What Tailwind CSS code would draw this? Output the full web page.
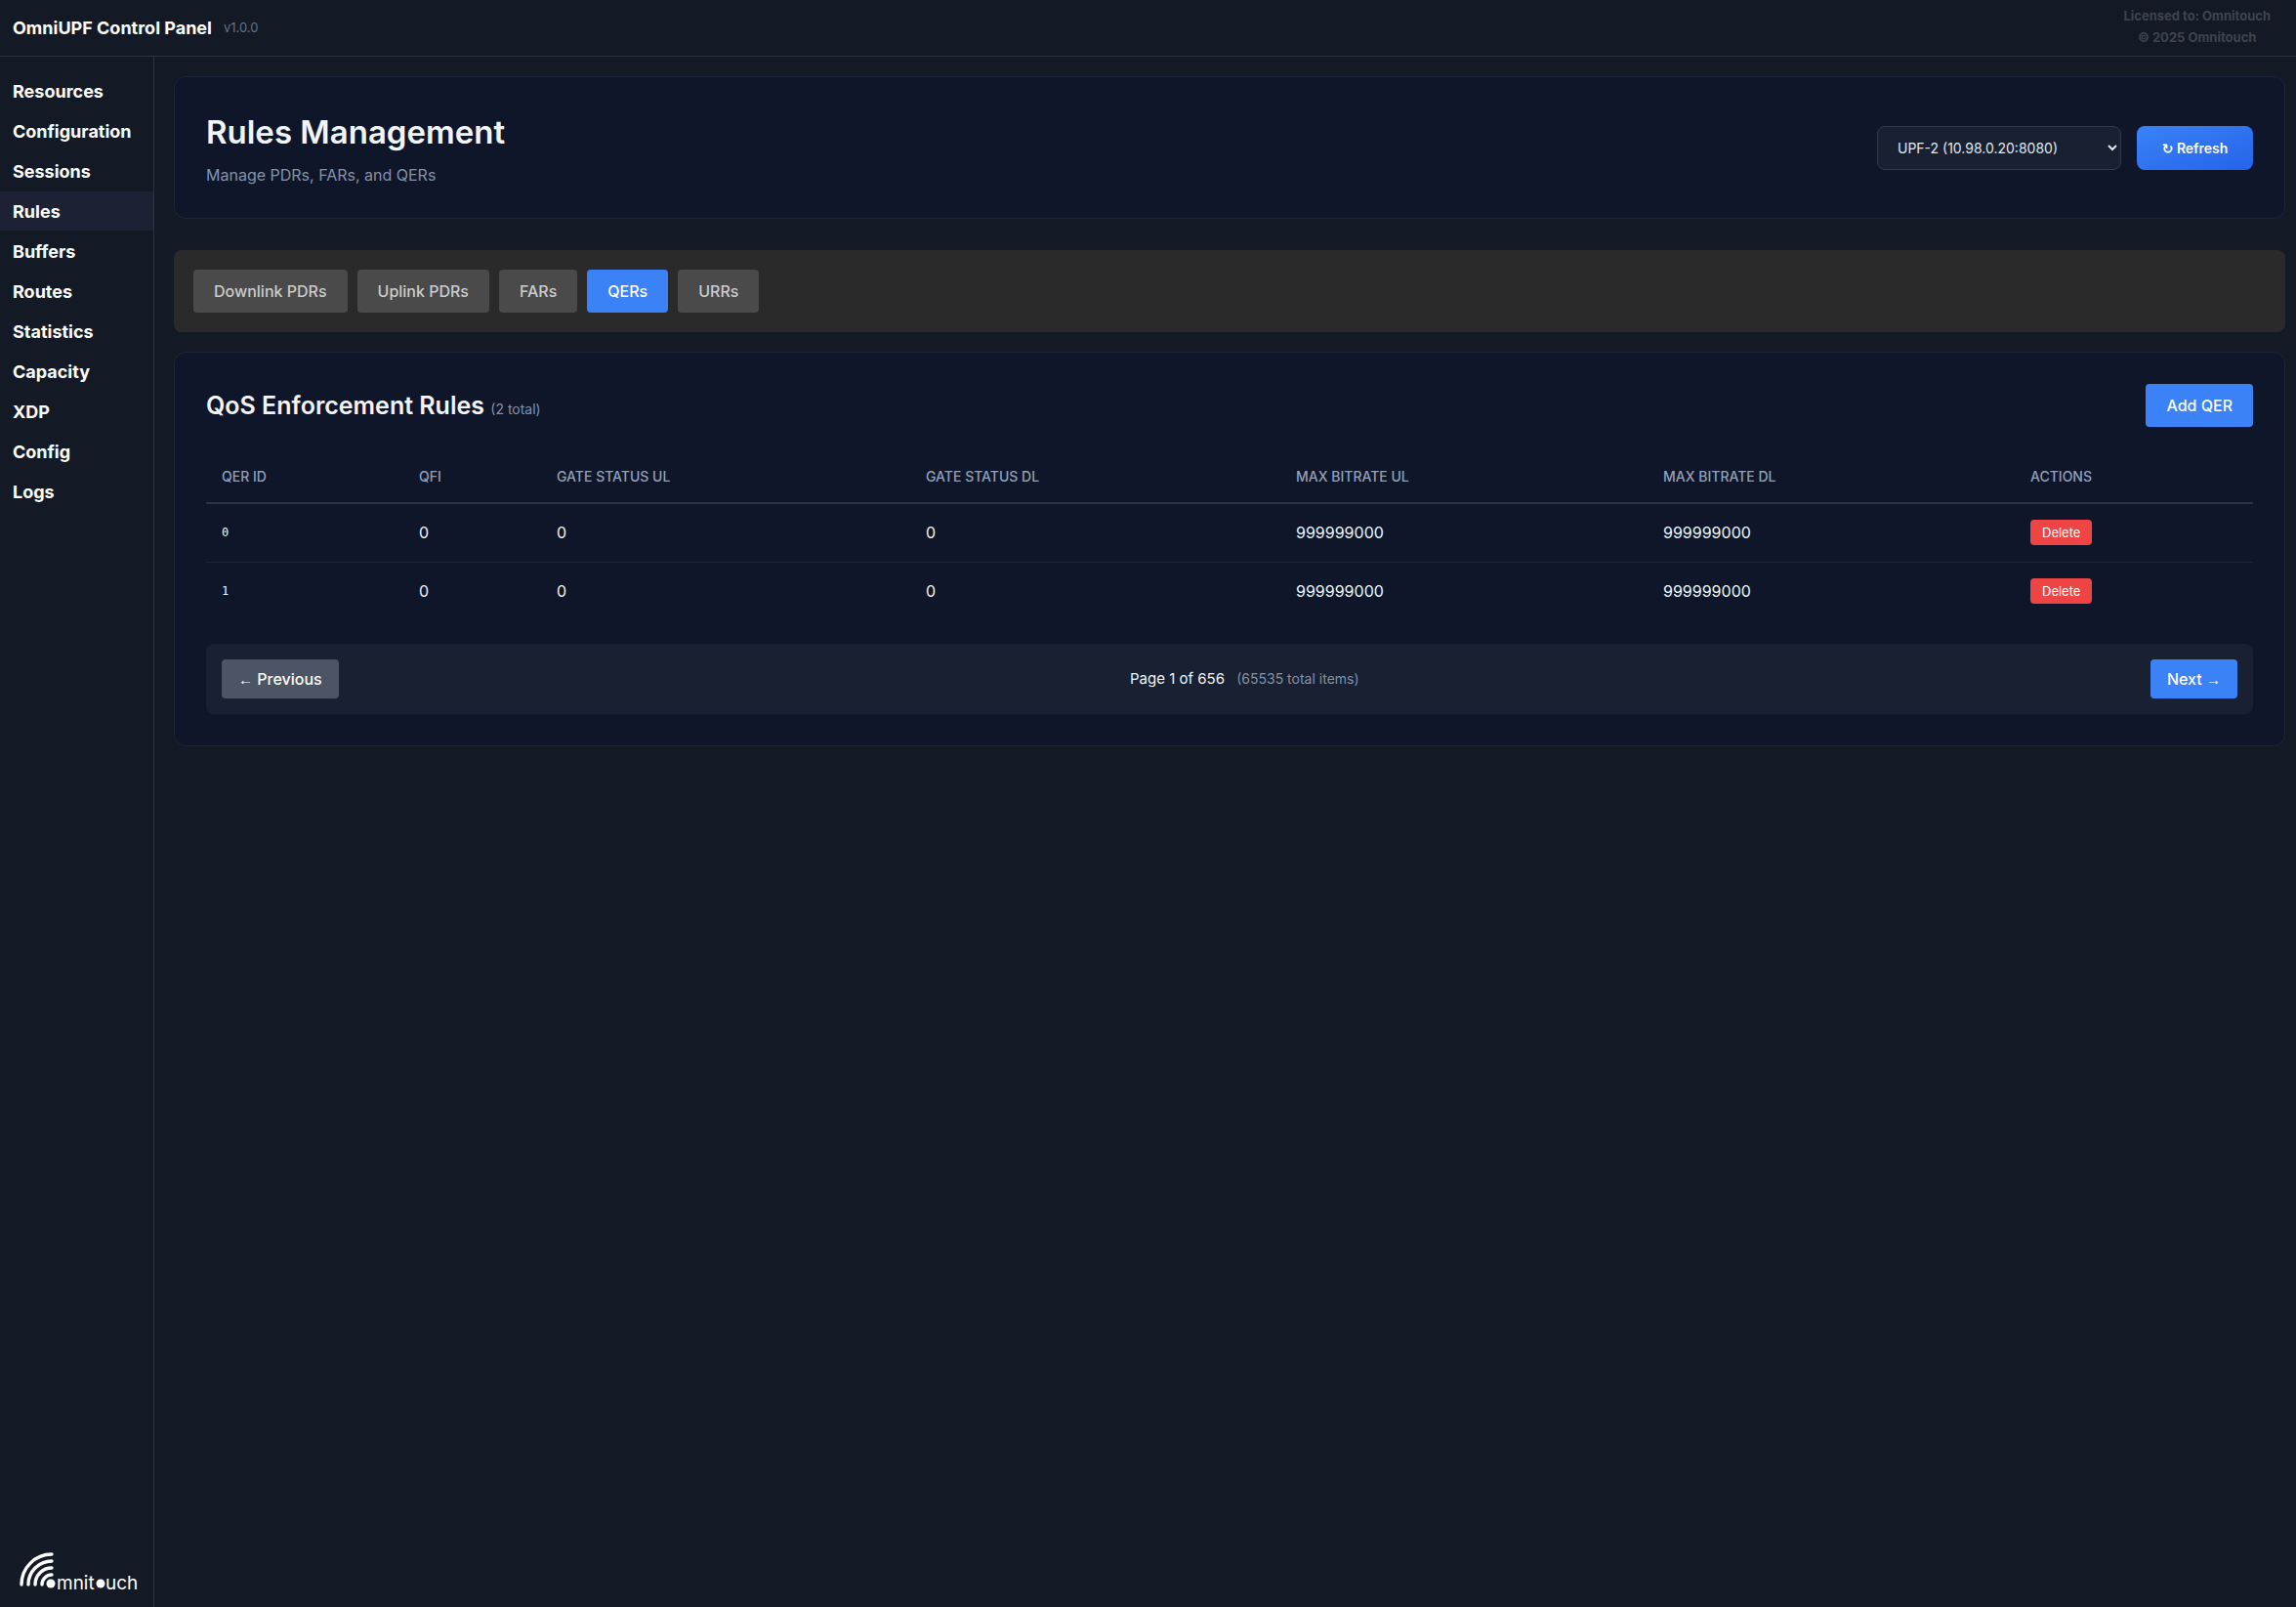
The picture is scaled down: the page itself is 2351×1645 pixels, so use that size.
<!DOCTYPE html>
<html lang="en">
<head>
  <meta charset="UTF-8">
  <meta name="viewport" content="width=device-width, initial-scale=1.0">
  <title>OmniUPF Control Panel</title>
  <script src="https://cdn.jsdelivr.net/npm/@tailwindcss/browser@4"></script>
</head>
<body class="min-h-screen flex flex-col bg-[#131a26] text-slate-100 text-base font-['Inter','Liberation_Sans',sans-serif]">

  <!-- Header -->
  <header class="h-[58px] shrink-0 flex items-center justify-between pl-[13px] pr-[26px] border-b border-[#2b3644]">
    <div class="flex items-center gap-3">
      <h1 class="text-[18px] font-bold text-white">OmniUPF Control Panel</h1>
      <span class="text-[13px] text-slate-500">v1.0.0</span>
    </div>
    <div class="pb-1 text-[13px] leading-[22px] font-bold text-center text-[#3e444e]">
      <p>Licensed to: Omnitouch</p>
      <p>© 2025 Omnitouch</p>
    </div>
  </header>

  <div class="flex flex-1">
    <!-- Sidebar -->
    <aside class="w-[158px] shrink-0 flex flex-col justify-between border-r border-[#2b3644] pt-[15px]">
      <nav class="flex flex-col gap-px text-[18px] leading-[38px] font-bold text-white">
        <a href="#" class="pl-[13px] pt-0.5 hover:bg-[#1c2233]">Resources</a>
        <a href="#" class="pl-[13px] pt-0.5 hover:bg-[#1c2233]">Configuration</a>
        <a href="#" class="pl-[13px] pt-0.5 hover:bg-[#1c2233]">Sessions</a>
        <a href="#" class="pl-[13px] pt-0.5 bg-[#1c2233]">Rules</a>
        <a href="#" class="pl-[13px] pt-0.5 hover:bg-[#1c2233]">Buffers</a>
        <a href="#" class="pl-[13px] pt-0.5 hover:bg-[#1c2233]">Routes</a>
        <a href="#" class="pl-[13px] pt-0.5 hover:bg-[#1c2233]">Statistics</a>
        <a href="#" class="pl-[13px] pt-0.5 hover:bg-[#1c2233]">Capacity</a>
        <a href="#" class="pl-[13px] pt-0.5 hover:bg-[#1c2233]">XDP</a>
        <a href="#" class="pl-[13px] pt-0.5 hover:bg-[#1c2233]">Config</a>
        <a href="#" class="pl-[13px] pt-0.5 hover:bg-[#1c2233]">Logs</a>
      </nav>
      <svg class="ml-5 mb-2 w-[124px] h-[48px]" viewBox="0 0 124 48" fill="none" stroke="#fff" stroke-width="3.4" stroke-linecap="round" role="img" aria-label="omnitouch">
        <path d="M2 33A31 31 0 0 1 33 2"/>
        <path d="M9 33A24 24 0 0 1 33 9"/>
        <path d="M16 33A17 17 0 0 1 33 16"/>
        <path d="M23 33A10 10 0 0 1 33 23"/>
        <circle cx="32" cy="32" r="4.5" fill="#fff" stroke="none"/>
        <circle cx="83" cy="32" r="4.5" fill="#fff" stroke="none"/>
        <g fill="#fff" stroke="none" font-size="19">
          <text x="38" y="38">mnit</text>
          <text x="88" y="38">uch</text>
        </g>
      </svg>
    </aside>

    <!-- Main Content -->
    <main class="flex-1 pl-5 pr-[11px] py-5">
      <section class="flex items-center justify-between h-[146px] px-8 mb-8 rounded-xl border border-[#1b2638] bg-[#101629]">
        <div class="pt-2">
          <h2 class="text-[33px] leading-[40px] font-semibold mb-2">Rules Management</h2>
          <p class="leading-[32px] text-[#8492a8]">Manage PDRs, FARs, and QERs</p>
        </div>
        <div class="flex gap-4">
          <select aria-label="UPF instance" class="w-[250px] h-[45px] pl-4 rounded-lg border border-[#2f3948] bg-[#182031] text-[14px] text-slate-200">
            <option>UPF-2 (10.98.0.20:8080)</option>
          </select>
          <button class="w-[119px] h-[45px] rounded-lg bg-linear-to-br from-[#3b82f6] to-[#2563eb] text-[14px] font-semibold text-white"><span class="font-['DejaVu_Sans'] leading-none">↻</span> Refresh</button>
        </div>
      </section>

      <!-- Tabs -->
      <div class="flex gap-[10px] p-5 mb-5 rounded-lg bg-[#2a2a2a] font-medium text-[#cccccc]">
        <button class="h-[44px] px-[21px] rounded bg-[#4a4a4a]">Downlink PDRs</button>
        <button class="h-[44px] px-[21px] rounded bg-[#4a4a4a]">Uplink PDRs</button>
        <button class="h-[44px] px-[21px] rounded bg-[#4a4a4a]">FARs</button>
        <button class="h-[44px] px-[21px] rounded bg-[#3b82f6] text-white">QERs</button>
        <button class="h-[44px] px-[21px] rounded bg-[#4a4a4a]">URRs</button>
      </div>

      <section class="p-8 rounded-xl border border-[#1b2638] bg-[#101629]">
        <div class="flex items-center justify-between mb-6">
          <h3 class="text-[25px] leading-[40px] font-semibold">QoS Enforcement Rules <span class="text-[14px] leading-none font-normal text-[#8492a8]">(2 total)</span></h3>
          <button class="h-[44px] px-[21px] rounded bg-[#3b82f6] font-medium text-white">Add QER</button>
        </div>

        <table class="w-full table-fixed text-left">
          <thead class="text-[14px] text-slate-400">
            <tr class="h-[54px] border-b-2 border-[#2a3346]">
              <th class="w-[202px] px-4 font-medium">QER ID</th>
              <th class="w-[141px] px-4 font-medium">QFI</th>
              <th class="w-[378px] px-4 font-medium">GATE STATUS UL</th>
              <th class="w-[379px] px-4 font-medium">GATE STATUS DL</th>
              <th class="w-[376px] px-4 font-medium">MAX BITRATE UL</th>
              <th class="w-[376px] px-4 font-medium">MAX BITRATE DL</th>
              <th class="px-4 font-medium">ACTIONS</th>
            </tr>
          </thead>
          <tbody>
            <tr class="h-[60px] border-b border-[#1b2638]">
              <td class="px-4 text-[12px] font-['DejaVu_Sans_Mono','Liberation_Mono',monospace]">0</td>
              <td class="px-4">0</td>
              <td class="px-4">0</td>
              <td class="px-4">0</td>
              <td class="px-4">999999000</td>
              <td class="px-4">999999000</td>
              <td class="px-4"><button class="block h-[26px] px-3 rounded bg-[#ef4444] text-[13px] text-white">Delete</button></td>
            </tr>
            <tr class="h-[60px]">
              <td class="px-4 text-[12px] font-['DejaVu_Sans_Mono','Liberation_Mono',monospace]">1</td>
              <td class="px-4">0</td>
              <td class="px-4">0</td>
              <td class="px-4">0</td>
              <td class="px-4">999999000</td>
              <td class="px-4">999999000</td>
              <td class="px-4"><button class="block h-[26px] px-3 rounded bg-[#ef4444] text-[13px] text-white">Delete</button></td>
            </tr>
          </tbody>
        </table>

        <!-- Pagination -->
        <div class="flex items-center justify-between mt-6 p-4 rounded-lg bg-[#182031]">
          <button class="h-[40px] px-[17px] rounded bg-[#4b5563] font-medium text-white"><span class="text-[15px] leading-none font-['Liberation_Sans']">←</span> Previous</button>
          <p class="text-[15px]">Page 1 of 656 <span class="ml-2 text-[14px] text-[#8492a8]">(65535 total items)</span></p>
          <button class="h-[40px] px-[17px] rounded bg-[#3b82f6] font-medium text-white">Next <span class="text-[15px] leading-none font-['Liberation_Sans']">→</span></button>
        </div>
      </section>
    </main>
  </div>

</body>
</html>
